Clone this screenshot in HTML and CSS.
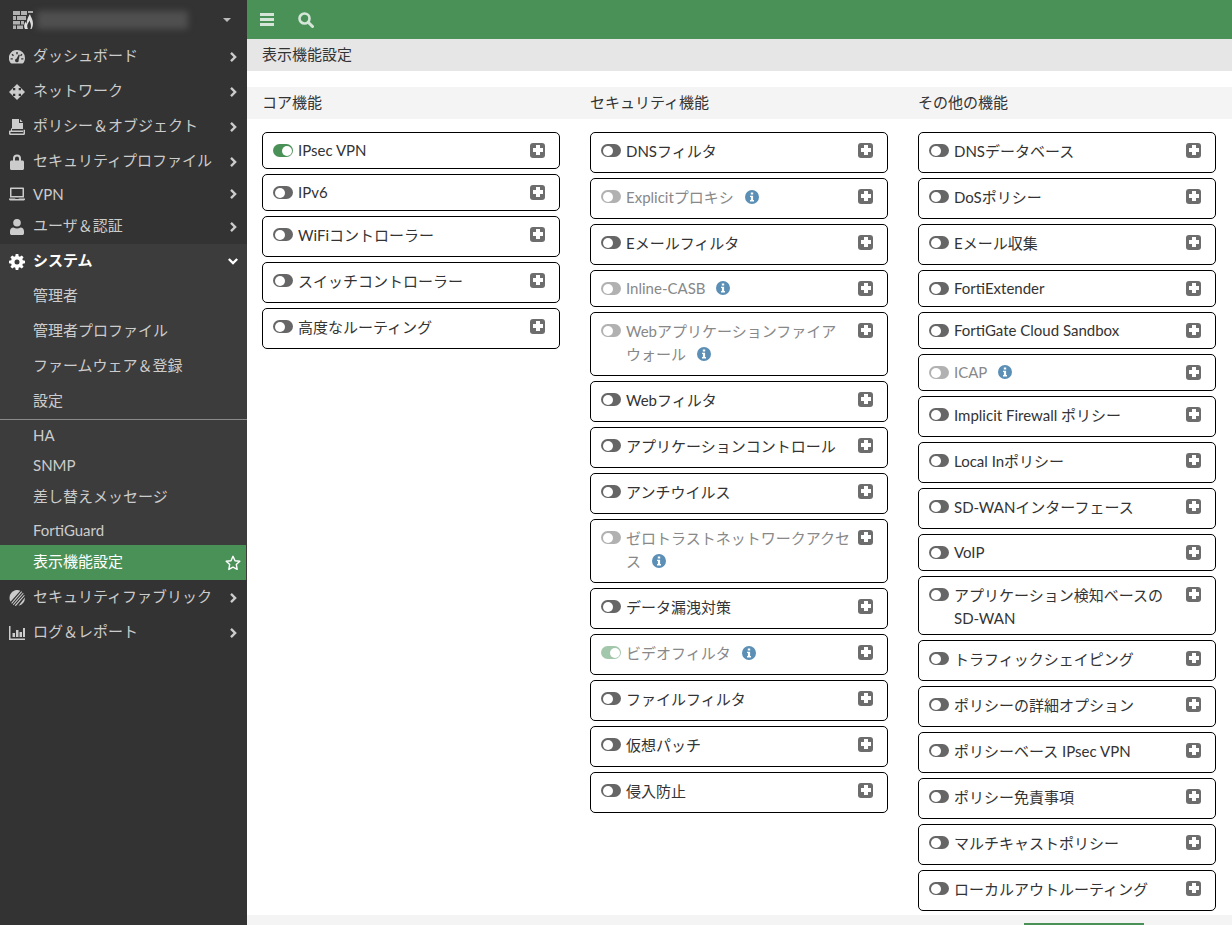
FILE: index.html
```html
<!DOCTYPE html>
<html lang="ja">
<head>
    <meta charset="UTF-8">
    <meta name="viewport" content="width=device-width, initial-scale=1.0">
    <title>表示機能設定</title>
    <link rel="stylesheet" href="styles.css">
</head>
<body>
    <svg class="sprites" width="0" height="0">
        <symbol id="i-gauge" viewBox="0 0 16 14"><path fill-rule="evenodd" d="M8 0a8 8 0 0 1 8 8c0 1.700-.5 3.300-1.400 4.700-.3.500-.8.800-1.300.800H2.700c-.5 0-1-.3-1.300-.8A8 8 0 0 1 8 0zM7.300 2v2.300h1.400V2zM3.500 3.800l-1 1 1.500 1.500 1-1zM12.500 3.800L11 5.300l1 1 1.500-1.500zM1.600 8.200v1.400h2.200V8.200zM12.200 8.200v1.400h2.200V8.200zM9.800 4.500L7.500 8.700a1.800 1.800 0 1 0 2.100 1.200l1.200-5z"/></symbol>
        <symbol id="i-move" viewBox="0 0 16 16"><path d="M8 0l4 4H9.700v2.300H12V4l4 4-4 4V9.700H9.700V12H12l-4 4-4-4h2.300V9.700H4V12L0 8l4-4v2.300h2.300V4H4z"/></symbol>
        <symbol id="i-policy" viewBox="0 0 16 16"><path fill-rule="evenodd" d="M3 0h7v4h4v6H3zM11 .3L13.800 3H11zM2 9.500v2H1.200C.5 11.500 0 12 0 12.700v2.100C0 15.500.5 16 1.200 16h13.600c.7 0 1.200-.5 1.200-1.200v-4h-1.500v3.700H1.500v-1.500H14v-1.500H3v-2.500z"/></symbol>
        <symbol id="i-lock" viewBox="0 0 14 16"><path fill-rule="evenodd" d="M3 6.500V4.500a4 4 0 0 1 8 0v2h1.500c.8 0 1.500.7 1.500 1.500v6.500c0 .8-.7 1.500-1.500 1.500h-11C.7 16 0 15.300 0 14.500V8c0-.8.7-1.500 1.500-1.500zM5 6.500h4v-2a2 2 0 0 0-4 0z"/></symbol>
        <symbol id="i-laptop" viewBox="0 0 16 13"><path fill-rule="evenodd" d="M2 0h12c.6 0 1 .4 1 1v9H1V1c0-.6.4-1 1-1zM2.500 1.500V8.500h11V1.500zM0 11h6l.5.500h3L10 11h6v.8c0 .7-.5 1.200-1.200 1.200H1.200C.5 13 0 12.500 0 11.800z"/></symbol>
        <symbol id="i-user" viewBox="0 0 14 16"><circle cx="7" cy="3.800" r="3.800"/><path d="M3.500 8.500c1 .7 2.200 1 3.500 1s2.500-.3 3.500-1C12.600 8.500 14 10 14 12.200v2c0 1-.8 1.800-1.800 1.800H1.800C.8 16 0 15.200 0 14.200v-2C0 10 1.400 8.500 3.500 8.500z"/></symbol>
        <symbol id="i-gear" viewBox="0 0 16 16"><path fill-rule="evenodd" d="M6.700 0h2.600l.4 2.200 1.200.5L12.700 1.400l1.900 1.900-1.300 1.800.5 1.200 2.200.4v2.600l-2.200.4-.5 1.200 1.300 1.800-1.900 1.900-1.800-1.300-1.200.5-.4 2.200H6.700l-.4-2.200-1.200-.5-1.800 1.300-1.900-1.900 1.300-1.800-.5-1.200L0 9.300V6.700l2.200-.4.5-1.200L1.400 3.300l1.900-1.900 1.800 1.300 1.200-.5zM8 5.500a2.500 2.500 0 1 0 0 5 2.500 2.500 0 0 0 0-5z"/></symbol>
        <symbol id="i-fabric" viewBox="0 0 16 16"><path d="M8 0c1.200 0 2.300.3 3.300.8L1.500 11.800A8 8 0 0 1 8 0z"/><path d="M12.300 1.300l.8.600L3 13.700l-.7-.7zM14 2.800l.6.800L4.700 15l-.9-.5zM15.200 4.800l.4 1-8.700 10.100-1.200-.3zM15.900 7.500a8 8 0 0 1-6.300 8.300z"/></symbol>
        <symbol id="i-chart" viewBox="0 0 16 14"><path d="M0 0h1.500v12.500H16V14H0zM3.500 7H6v4H3.500zM7 4h2.500v7H7zM10.500 6H13v5h-2.500zM14 2h2v9h-2z"/></symbol>
        <symbol id="i-right" viewBox="0 0 8 12"><path d="M2 0l6 6-6 6-2-2 4-4-4-4z"/></symbol>
        <symbol id="i-down" viewBox="0 0 12 8"><path d="M2 0l4 4 4-4 2 2-6 6-6-6z"/></symbol>
        <symbol id="i-star" viewBox="0 0 16 16"><path fill="none" stroke="currentColor" stroke-width="1.400" stroke-linejoin="round" d="M8 1.300l2 4.400 4.800.6-3.500 3.300.9 4.800L8 12.100l-4.200 2.300.9-4.800L1.200 6.300 6 5.700z"/></symbol>
        <symbol id="i-info" viewBox="0 0 14 14"><path fill-rule="evenodd" d="M7 0a7 7 0 1 1 0 14A7 7 0 0 1 7 0zM5.800 2.500v2.100h2.400V2.500zM5 5.700v1.400h.9v2.900H5v1.500h4v-1.500h-.9V5.700z"/></symbol>
    </svg>

    <div class="app">
        <aside class="sidebar">
            <div class="brand">
                <svg class="brand-logo" viewBox="0 0 20 18" width="20" height="18">
                    <path fill="#b0b0b0" d="M0 0h7v4H0zM8 0h6v4H8zM15 0h5v2h-5zM0 5h3v4H0zM4 5h9v4H4zM0 10h7v3.500H0zM8 10h3v3.500H8zM0 14.500h3V18H0zM4 14.500h6V18H4z"/>
                    <path fill="#e0e0e0" fill-rule="evenodd" d="M17 3c.4 2.700 3 5 3 9.500 0 2.500-.8 4.200-1.500 5.500H12c-1.300-1.800-1.300-5 .8-7.500 0 1 .3 1.800.8 2.300C13.700 9.300 15 6 17 3zM16.500 9.500c-.8 2-2.300 3.500-2.300 5.500 0 1.300.4 2.200.8 3h2.300c.5-1 .7-2 .7-3 0-2.300-1-3.700-1.500-5.500z"/>
                </svg>
                <div class="brand-name"></div>
                <span class="brand-caret"></span>
            </div>
            <ul class="nav">
                <li class="nav-item"><svg class="nav-icon"><use href="#i-gauge"/></svg><span>ダッシュボード</span><svg class="chev"><use href="#i-right"/></svg></li>
                <li class="nav-item"><svg class="nav-icon"><use href="#i-move"/></svg><span>ネットワーク</span><svg class="chev"><use href="#i-right"/></svg></li>
                <li class="nav-item"><svg class="nav-icon"><use href="#i-policy"/></svg><span>ポリシー＆オブジェクト</span><svg class="chev"><use href="#i-right"/></svg></li>
                <li class="nav-item"><svg class="nav-icon"><use href="#i-lock"/></svg><span>セキュリティプロファイル</span><svg class="chev"><use href="#i-right"/></svg></li>
                <li class="nav-item latin"><svg class="nav-icon"><use href="#i-laptop"/></svg><span>VPN</span><svg class="chev"><use href="#i-right"/></svg></li>
                <li class="nav-item"><svg class="nav-icon"><use href="#i-user"/></svg><span>ユーザ＆認証</span><svg class="chev"><use href="#i-right"/></svg></li>
            </ul>
            <ul class="nav nav-open">
                <li class="nav-item nav-current"><svg class="nav-icon"><use href="#i-gear"/></svg><span>システム</span><svg class="chev-down"><use href="#i-down"/></svg></li>
                <li class="nav-sub">管理者</li>
                <li class="nav-sub">管理者プロファイル</li>
                <li class="nav-sub">ファームウェア＆登録</li>
                <li class="nav-sub nav-last">設定</li>
                <li class="nav-sub latin">HA</li>
                <li class="nav-sub latin">SNMP</li>
                <li class="nav-sub">差し替えメッセージ</li>
                <li class="nav-sub latin">FortiGuard</li>
                <li class="nav-sub nav-active"><span>表示機能設定</span><svg class="star"><use href="#i-star"/></svg></li>
            </ul>
            <ul class="nav">
                <li class="nav-item"><svg class="nav-icon"><use href="#i-fabric"/></svg><span>セキュリティファブリック</span><svg class="chev"><use href="#i-right"/></svg></li>
                <li class="nav-item"><svg class="nav-icon"><use href="#i-chart"/></svg><span>ログ＆レポート</span><svg class="chev"><use href="#i-right"/></svg></li>
            </ul>
        </aside>

        <main class="main">
            <header class="topbar">
                <span class="burger"></span>
                <svg class="search" viewBox="0 0 16 16" width="16" height="16">
                    <circle cx="6.500" cy="6.500" r="5" fill="none" stroke="currentColor" stroke-width="2.600"/>
                    <path d="M10.200 10.200l4.300 4.300" fill="none" stroke="currentColor" stroke-width="3" stroke-linecap="round"/>
                </svg>
            </header>
            <h1 class="page-title">表示機能設定</h1>

            <div class="col-heads">
                <h2>コア機能</h2>
                <h2>セキュリティ機能</h2>
                <h2>その他の機能</h2>
            </div>

            <div class="cols">
                <div class="col">
                    <div class="card latin"><span class="toggle on"></span><span class="card-label">IPsec VPN</span><span class="plus"></span></div>
                    <div class="card latin"><span class="toggle"></span><span class="card-label">IPv6</span><span class="plus"></span></div>
                    <div class="card"><span class="toggle"></span><span class="card-label">WiFiコントローラー</span><span class="plus"></span></div>
                    <div class="card"><span class="toggle"></span><span class="card-label">スイッチコントローラー</span><span class="plus"></span></div>
                    <div class="card"><span class="toggle"></span><span class="card-label">高度なルーティング</span><span class="plus"></span></div>
                </div>
                <div class="col">
                    <div class="card"><span class="toggle"></span><span class="card-label">DNSフィルタ</span><span class="plus"></span></div>
                    <div class="card muted"><span class="toggle"></span><span class="card-label">Explicitプロキシ<svg class="info"><use href="#i-info"/></svg></span><span class="plus"></span></div>
                    <div class="card"><span class="toggle"></span><span class="card-label">Eメールフィルタ</span><span class="plus"></span></div>
                    <div class="card muted latin"><span class="toggle"></span><span class="card-label">Inline-CASB<svg class="info"><use href="#i-info"/></svg></span><span class="plus"></span></div>
                    <div class="card muted"><span class="toggle"></span><span class="card-label">Webアプリケーションファイアウォール<svg class="info"><use href="#i-info"/></svg></span><span class="plus"></span></div>
                    <div class="card"><span class="toggle"></span><span class="card-label">Webフィルタ</span><span class="plus"></span></div>
                    <div class="card"><span class="toggle"></span><span class="card-label">アプリケーションコントロール</span><span class="plus"></span></div>
                    <div class="card"><span class="toggle"></span><span class="card-label">アンチウイルス</span><span class="plus"></span></div>
                    <div class="card muted"><span class="toggle"></span><span class="card-label">ゼロトラストネットワークアクセス<svg class="info"><use href="#i-info"/></svg></span><span class="plus"></span></div>
                    <div class="card"><span class="toggle"></span><span class="card-label">データ漏洩対策</span><span class="plus"></span></div>
                    <div class="card muted"><span class="toggle on"></span><span class="card-label">ビデオフィルタ<svg class="info"><use href="#i-info"/></svg></span><span class="plus"></span></div>
                    <div class="card"><span class="toggle"></span><span class="card-label">ファイルフィルタ</span><span class="plus"></span></div>
                    <div class="card"><span class="toggle"></span><span class="card-label">仮想パッチ</span><span class="plus"></span></div>
                    <div class="card"><span class="toggle"></span><span class="card-label">侵入防止</span><span class="plus"></span></div>
                </div>
                <div class="col">
                    <div class="card"><span class="toggle"></span><span class="card-label">DNSデータベース</span><span class="plus"></span></div>
                    <div class="card"><span class="toggle"></span><span class="card-label">DoSポリシー</span><span class="plus"></span></div>
                    <div class="card"><span class="toggle"></span><span class="card-label">Eメール収集</span><span class="plus"></span></div>
                    <div class="card latin"><span class="toggle"></span><span class="card-label">FortiExtender</span><span class="plus"></span></div>
                    <div class="card latin"><span class="toggle"></span><span class="card-label">FortiGate Cloud Sandbox</span><span class="plus"></span></div>
                    <div class="card muted latin"><span class="toggle"></span><span class="card-label">ICAP<svg class="info"><use href="#i-info"/></svg></span><span class="plus"></span></div>
                    <div class="card"><span class="toggle"></span><span class="card-label">Implicit Firewall ポリシー</span><span class="plus"></span></div>
                    <div class="card"><span class="toggle"></span><span class="card-label">Local Inポリシー</span><span class="plus"></span></div>
                    <div class="card"><span class="toggle"></span><span class="card-label">SD-WANインターフェース</span><span class="plus"></span></div>
                    <div class="card latin"><span class="toggle"></span><span class="card-label">VoIP</span><span class="plus"></span></div>
                    <div class="card mixed"><span class="toggle"></span><span class="card-label">アプリケーション検知ベースの SD-WAN</span><span class="plus"></span></div>
                    <div class="card"><span class="toggle"></span><span class="card-label">トラフィックシェイピング</span><span class="plus"></span></div>
                    <div class="card"><span class="toggle"></span><span class="card-label">ポリシーの詳細オプション</span><span class="plus"></span></div>
                    <div class="card"><span class="toggle"></span><span class="card-label">ポリシーベース IPsec VPN</span><span class="plus"></span></div>
                    <div class="card"><span class="toggle"></span><span class="card-label">ポリシー免責事項</span><span class="plus"></span></div>
                    <div class="card"><span class="toggle"></span><span class="card-label">マルチキャストポリシー</span><span class="plus"></span></div>
                    <div class="card"><span class="toggle"></span><span class="card-label">ローカルアウトルーティング</span><span class="plus"></span></div>
                </div>
            </div>

            <footer class="footer"><span class="apply"></span></footer>
        </main>
    </div>
</body>
</html>
```

FILE: styles.css
```css
html, body {
    margin: 0;
    padding: 0;
    height: 100%;
    overflow: hidden;
}

body {
    font-family: Lato, "Noto Sans CJK JP", sans-serif;
    font-size: 15px;
    color: #333;
    background-color: white;
}

.sprites {
    position: absolute;
}

.app {
    display: flex;
    height: 925px;
    overflow: hidden;
}

/* sidebar */

.sidebar {
    width: 247px;
    flex-shrink: 0;
    background-color: #333;
    color: #ccc;
}

.brand {
    display: flex;
    align-items: center;
    height: 39px;
    padding-left: 13px;
    box-sizing: border-box;
}

.brand-logo {
    flex-shrink: 0;
}

.brand-name {
    width: 151px;
    height: 18px;
    margin-left: 4px;
    background-color: #4f4f4f;
    filter: blur(3px);
}

.brand-caret {
    margin-left: 35px;
    border-top: 4px solid #bbb;
    border-left: 4px solid transparent;
    border-right: 4px solid transparent;
}

.nav {
    list-style: none;
    margin: 0;
    padding: 0;
}

.nav-item {
    display: flex;
    align-items: center;
    height: 35px;
    padding: 0 10px 0 9px;
    box-sizing: border-box;
}

.nav-item span {
    margin-bottom: 5px;
}

.nav-item.latin {
    height: 30px;
}

.nav-item.latin span {
    margin-bottom: 0;
}

.nav-icon {
    width: 16px;
    height: 16px;
    margin-right: 8px;
    fill: #ccc;
    flex-shrink: 0;
}

.chev {
    width: 7px;
    height: 10px;
    margin-left: auto;
    fill: #ccc;
}

.chev-down {
    width: 10px;
    height: 7px;
    margin-left: auto;
    margin-right: -1px;
    fill: white;
}

.nav-open {
    background-color: #3c3c3c;
}

.nav-current {
    color: white;
    font-weight: 700;
}

.nav-current .nav-icon {
    fill: white;
}

.nav-sub {
    display: flex;
    align-items: center;
    height: 35px;
    padding: 0 6px 5px 33px;
    box-sizing: border-box;
}

.nav-sub.latin {
    height: 30px;
    padding-bottom: 0;
}

.nav-last {
    height: 36px;
    padding-bottom: 4px;
    border-bottom: 1px solid #8a8a8a;
}

.nav-active {
    margin-right: 1px;
    padding-right: 5px;
    background-color: #4a9158;
    color: white;
}

.star {
    width: 16px;
    height: 16px;
    margin: 0 0 -6px auto;
    color: white;
}

/* main area */

.main {
    flex-grow: 1;
    min-width: 0;
}

.topbar {
    display: flex;
    align-items: center;
    height: 39px;
    padding-left: 13px;
    background-color: #4a9158;
    color: #d5e6d9;
}

.burger {
    width: 14px;
    height: 2.500px;
    background-color: #d5e6d9;
    box-shadow: 0 -5px 0 #d5e6d9, 0 5px 0 #d5e6d9;
}

.search {
    margin-left: 24px;
}

.page-title {
    margin: 0 0 16px;
    padding: 0 15px;
    height: 32px;
    line-height: 30px;
    font-size: 15px;
    font-weight: 400;
    background-color: #e6e6e6;
}

.col-heads {
    display: grid;
    grid-template-columns: repeat(3, 298px);
    gap: 30px;
    padding: 0 15px;
    background-color: #f4f4f4;
}

.col-heads h2 {
    margin: 0;
    height: 32px;
    line-height: 30px;
    font-size: 15px;
    font-weight: 400;
}

.cols {
    display: grid;
    grid-template-columns: repeat(3, 298px);
    gap: 30px;
    padding: 13px 15px 4px;
}

.col {
    display: flex;
    flex-direction: column;
    gap: 5px;
}

.card {
    display: flex;
    align-items: flex-start;
    padding: 8.500px 14px 8.500px 10px;
    border: 1px solid black;
    border-radius: 5px;
}

.card-label {
    flex: 1;
    min-width: 0;
    margin: -2px 5px 1px 0;
    line-height: 23px;
    line-break: strict;
}

.latin .card-label {
    margin: -1px 5px 1px 0;
    line-height: 18px;
}

/* second line has no kana, so the card is a little shorter */
.mixed .card-label {
    margin-bottom: -4px;
}

.muted .card-label {
    color: #888;
}

.toggle {
    position: relative;
    flex-shrink: 0;
    width: 20px;
    height: 13px;
    margin: 2.500px 5px 0 0;
    border-radius: 7px;
    background-color: #666;
}

.toggle::after {
    content: "";
    position: absolute;
    top: 1.500px;
    left: 1.500px;
    width: 10px;
    height: 10px;
    border-radius: 50%;
    background-color: white;
}

.toggle.on {
    background-color: #4a9158;
}

.toggle.on::after {
    left: 8.500px;
}

.muted .toggle {
    opacity: 0.5;
}

.plus {
    position: relative;
    flex-shrink: 0;
    width: 15px;
    height: 15px;
    margin-top: 1px;
    border-radius: 3px;
    background-color: #6d6d6d;
}

.plus::before, .plus::after {
    content: "";
    position: absolute;
    background-color: white;
}

.plus::before {
    left: 2.500px;
    right: 2.500px;
    top: 5.500px;
    height: 4px;
}

.plus::after {
    top: 2.500px;
    bottom: 2.500px;
    left: 5.500px;
    width: 4px;
}

.info {
    width: 14px;
    height: 14px;
    margin-left: 11px;
    vertical-align: -1px;
    fill: #5b8fb5;
}

.footer {
    display: flex;
    justify-content: flex-end;
    height: 20px;
    padding: 8px 88px 0 0;
    background-color: #f4f4f4;
}

.apply {
    width: 120px;
    height: 32px;
    background-color: #4a9158;
}
```
